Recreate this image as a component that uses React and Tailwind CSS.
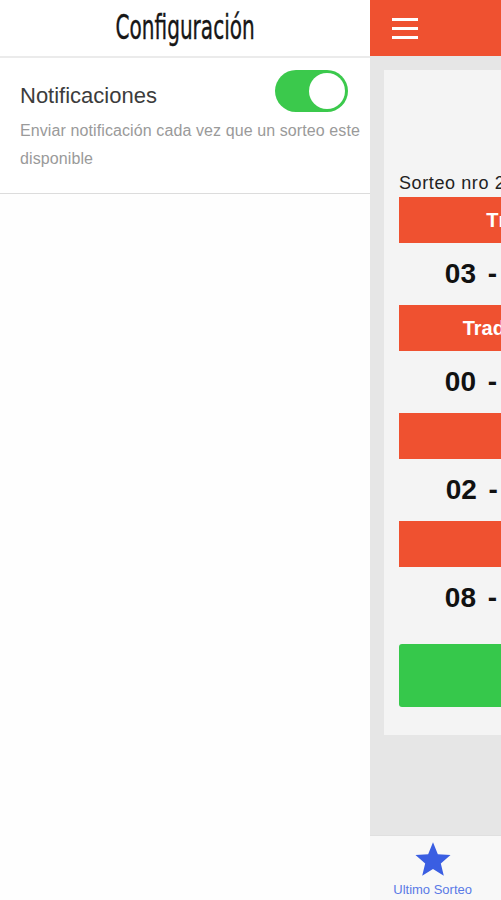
import React from "react";

const sans = { fontFamily: '"Liberation Sans", Arial, sans-serif' };

function Bar({ children, wide }) {
  return (
    <div
      className={
        "h-[46px] bg-[#ef5130] flex items-center justify-center text-white font-bold text-[20px] whitespace-nowrap overflow-hidden " +
        (wide ? "tracking-[1px]" : "")
      }
    >
      {children}
    </div>
  );
}

function Nums({ children }) {
  return (
    <div className="h-[62px] flex items-center justify-center text-[#111] font-bold text-[28px] whitespace-nowrap overflow-hidden [word-spacing:4px]">
      {children}
    </div>
  );
}

export default function App() {
  return (
    <div className="w-[501px] h-[900px] flex overflow-hidden bg-white" style={sans}>
      <aside className="w-[370px] shrink-0 flex flex-col bg-[#fefefe]">
        <header className="h-[58px] bg-white border-b-2 border-[#ebebeb] flex items-center justify-center">
          <span
            className="inline-block text-[34px] leading-none text-[#161616] scale-x-[0.655] -mt-[2px] [-webkit-text-stroke:0.4px_#161616]"
            style={{ fontFamily: '"DejaVu Sans Condensed", "DejaVu Sans", sans-serif' }}
          >
            Configuración
          </span>
        </header>
        <section className="bg-white border-b border-[#dcdcdc] pl-5 pr-[22px] pt-[12px] pb-[20px]">
          <div className="flex items-center justify-between">
            <span className="text-[22px] text-[#3c3c3c] mt-[8px]">Notificaciones</span>
            <div className="w-[73px] h-[42px] rounded-full bg-[#3bc94c] p-[3px] flex justify-end">
              <div className="w-[36px] h-[36px] rounded-full bg-white" />
            </div>
          </div>
          <p className="mt-[5px] text-[16px] leading-[28px] text-[#9a9a9a] tracking-[0.1px] -mr-[18px]">
            Enviar notificación cada vez que un sorteo este disponible
          </p>
        </section>
      </aside>

      <main className="w-[501px] shrink-0 flex flex-col bg-[#e6e6e6]">
        <header className="h-[56px] bg-[#ef5130] flex items-center pl-[22px]">
          <div className="flex flex-col gap-[6px]">
            <div className="w-[26px] h-[3px] bg-white" />
            <div className="w-[26px] h-[3px] bg-white" />
            <div className="w-[26px] h-[3px] bg-white" />
          </div>
        </header>
        <div className="flex-1 pt-[14px] px-[14px]">
          <div className="bg-[#f4f4f4] pt-[102px] px-[15px] pb-[28px]">
            <div className="text-[18px] leading-[22px] text-[#222] mb-[3px] tracking-[0.6px]">Sorteo nro 2356 - 10/04/2016</div>
            <Bar wide>Tradicional Primer Sorteo</Bar>
            <Nums>03 - 12 - 18 - 27 - 35 - 41</Nums>
            <Bar>Tradicional La Segunda del Quini</Bar>
            <Nums>00 - 09 - 14 - 22 - 31 - 44</Nums>
            <Bar>Revancha</Bar>
            <Nums>02 - 11 - 17 - 26 - 33 - 40</Nums>
            <Bar>Siempre Sale</Bar>
            <Nums>08 - 13 - 21 - 29 - 36 - 43</Nums>
            <div className="mt-[15px] h-[63px] rounded-[3px] bg-[#36c84b] flex items-center justify-center text-white font-bold text-[19px]">
              Pozo Extra
            </div>
          </div>
        </div>
        <nav className="h-[65px] bg-[#f8f8f8] border-t border-[#e0e0e0] grid grid-cols-4">
          <div className="flex flex-col items-center pt-[5px]">
            <svg width="38" height="36" viewBox="0 0 24 23" fill="#3a5ee2">
              <path d="M12 0.8l3.1 7.6 8.1.6-6.2 5.3 1.9 7.9L12 17.9l-6.9 4.3 1.9-7.9L.8 9l8.1-.6z" />
            </svg>
            <span className="text-[13px] leading-[15px] text-[#5a7ae6] mt-[5px] whitespace-nowrap">Ultimo Sorteo</span>
          </div>
          <div />
          <div />
          <div />
        </nav>
      </main>
    </div>
  );
}
